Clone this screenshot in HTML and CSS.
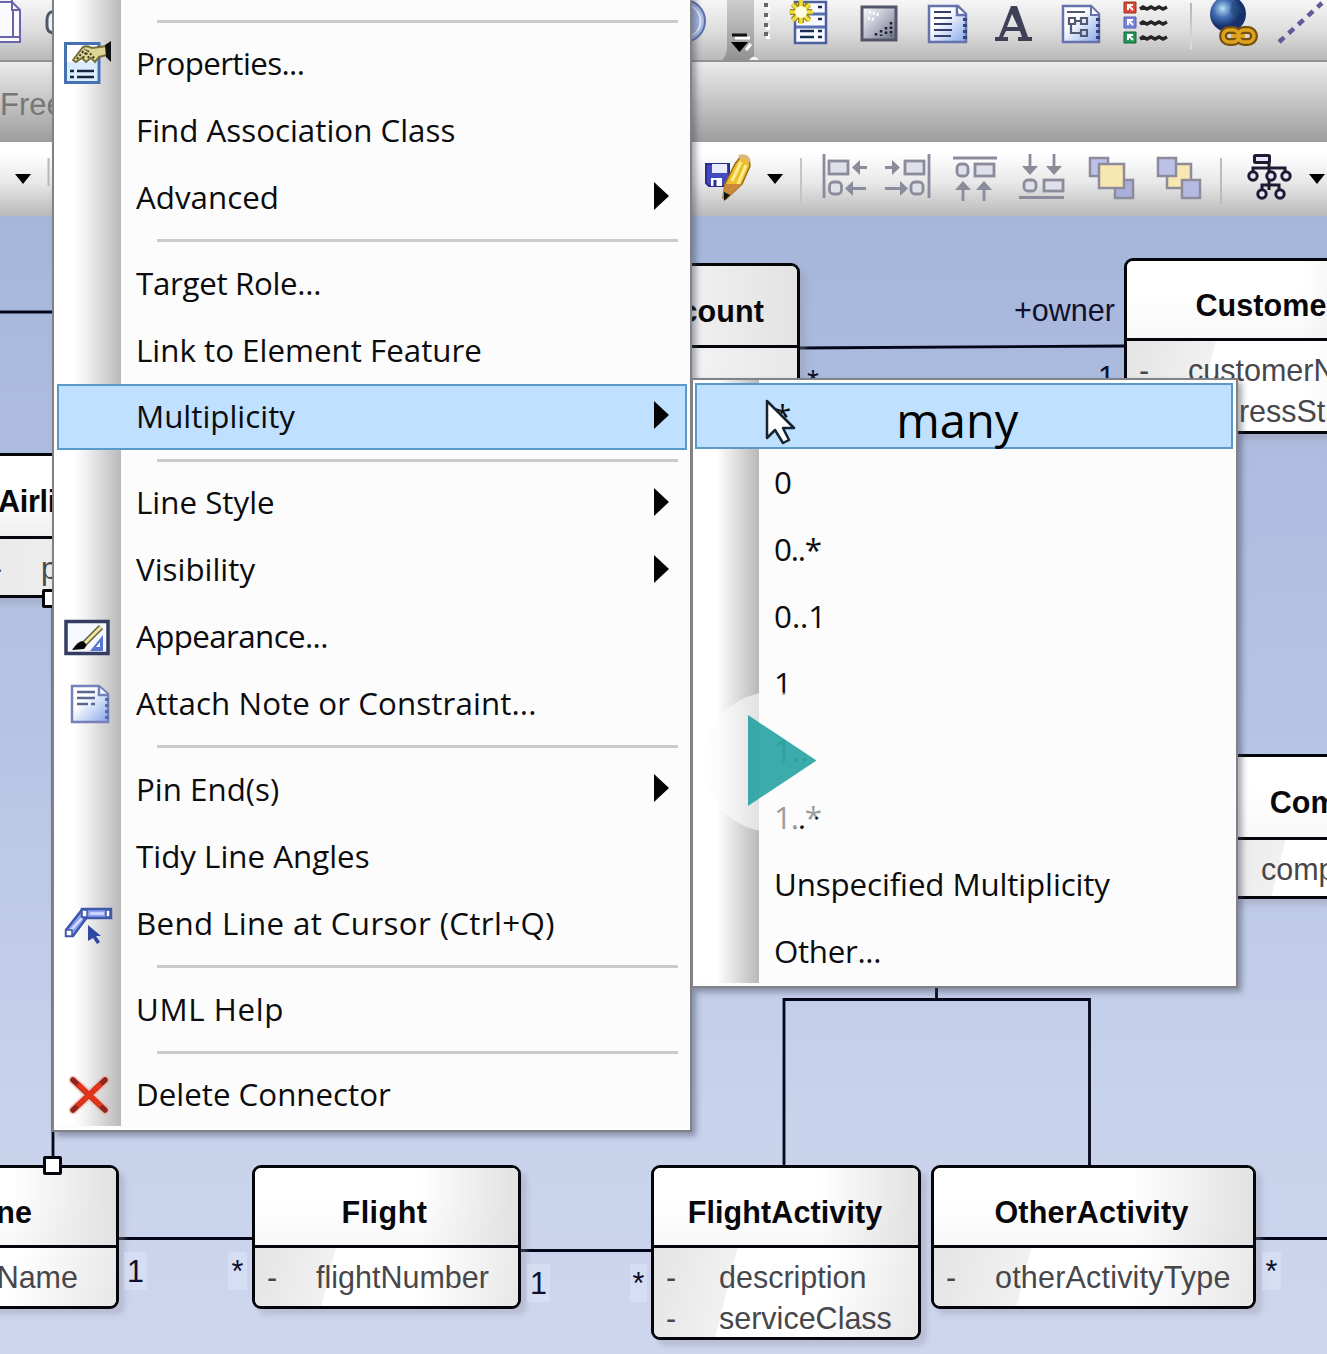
FILE: index.html
```html
<!DOCTYPE html>
<html lang="en">
<head>
<meta charset="utf-8">
<title>Class diagram</title>
<link rel="stylesheet" href="styles.css">
</head>
<body>
<div class="app">
  <header class="bar bar-elements">
    <div class="bar-left"><svg viewBox="0 0 53 62" width="53" height="62">
      <g fill="#fbfbff" stroke="#6a66ac" stroke-width="2"><path d="M-4 2H12L20 10V42H-4Z"/><path d="M12 0V10H20M13 10V37M-2 37H20" fill="none"/></g>
      <path d="M56 12h-5q-4 2-4 8v6q0 6 6 7" fill="#eef4fa" stroke="#4e5968" stroke-width="3"/></svg></div>
    <svg class="bar-start" viewBox="692 0 86 62" width="86" height="62">
      <circle cx="684" cy="21" r="21" fill="#a9b8e4" stroke="#5a6dac" stroke-width="2"/><circle cx="684" cy="21" r="16.500" fill="none" stroke="#e2e8fb" stroke-width="2"/>
      <path d="M727 0H754V60H722Q727 56 727 46Z" fill="url(#overflowShade)"/>
      <defs><linearGradient id="overflowShade" x1="0" y1="0" x2="0" y2="1"><stop offset="0" stop-color="#cdcdcd"/><stop offset="1" stop-color="#929292"/></linearGradient></defs>
      <path d="M735 38H750M746 50L751 44" stroke="#fff" stroke-width="3"/><path d="M732 35H747" stroke="#111" stroke-width="3"/><path d="M731 42H748L739.500 52Z" fill="#000"/>
      <path d="M749 60q5-7 10 0Z" fill="#f4f4f4"/>
      <g fill="#fff"><path d="M766 5h4v5h-4zM766 15h4v5h-4zM766 25h4v5h-4zM766 34h4v5h-4z"/></g>
      <g fill="#666"><path d="M764 3h4v4h-4zM764 13h4v4h-4zM764 23h4v4h-4zM764 32h4v4h-4z"/></g>
    </svg>
    <svg class="tool" viewBox="778 0 67 62">
      <path d="M795 2H826V43H795Z" fill="#f7f9ff" stroke="#4a609f" stroke-width="2.500"/><path d="M796 27H825M796 14H825" stroke="#5870b0" stroke-width="3"/>
      <path d="M800 31H814M800 37H814M818 31H822M818 37H822M818 7h4M818 19h4" stroke="#182c58" stroke-width="2.500"/>
      <path d="M801 1V23M790 12H812M793 4L809 20M809 4L793 20" stroke="#9a8418" stroke-width="6"/><path d="M801 0V24M789 12H813M792 4L810 21M810 4L792 21" stroke="#eedd3e" stroke-width="3.500"/><circle cx="801" cy="12" r="6" fill="#fffde0"/>
    </svg>
    <svg class="tool" viewBox="845 0 67 62">
      <defs><linearGradient id="metal" x1="0" y1="0" x2="1" y2="1"><stop offset="0" stop-color="#fff"/><stop offset=".45" stop-color="#bfc1cf"/><stop offset="1" stop-color="#686d83"/></linearGradient></defs>
      <path d="M862 7H896V40H862Z" fill="url(#metal)" stroke="#53556a" stroke-width="3"/>
      <path d="M891 22V36M886 27V36M881 30V36M876 33V36" stroke="#1d1d2b" stroke-width="2.500" stroke-dasharray="2.500 2"/><path d="M869 12l10 3M868 18l7 2" stroke="#fff" stroke-width="3" stroke-dasharray="2 2"/>
    </svg>
    <svg class="tool" viewBox="912 0 67 62">
      <defs><linearGradient id="paper" x1="0" y1="0" x2="1" y2="1"><stop offset=".35" stop-color="#fff"/><stop offset="1" stop-color="#85a7eb"/></linearGradient></defs>
      <path d="M929 6H958L966 14V42H929Z" fill="url(#paper)" stroke="#6672ac" stroke-width="2.500"/><path d="M957 7V15H966" fill="#fff" stroke="#6672ac" stroke-width="2.500"/>
      <path d="M965 18V42" stroke="#31457c" stroke-width="4" stroke-dasharray="3 3"/>
      <path d="M934 12H951M934 18H952M934 24H952M934 30H952M934 36H951" stroke="#35426f" stroke-width="2.200"/>
    </svg>
    <svg class="tool" viewBox="979 0 67 62"><path d="M1011 6H1017L1028 37H1032V41H1018V37H1022L1020 31H1006L1003 37H1008V41H995V37H999ZM1012 14L1007 27H1018Z" fill="#3f4056" fill-rule="evenodd"/></svg>
    <svg class="tool" viewBox="1046 0 67 62">
      <path d="M1063 6H1091L1099 14V42H1063Z" fill="url(#paper)" stroke="#6672ac" stroke-width="2.500"/><path d="M1091 7V15H1099" fill="#fff" stroke="#6672ac" stroke-width="2"/>
      <path d="M1098 18V42" stroke="#31457c" stroke-width="4" stroke-dasharray="3 3"/>
      <g fill="none" stroke="#515975" stroke-width="2.200"><path d="M1067 12H1085M1075 21H1080M1071 25V33H1080M1069 18h6v6h-6zM1081 18h6v6h-6zM1081 30h6v6h-6z"/></g>
    </svg>
    <svg class="tool" viewBox="1113 0 67 62">
      <path d="M1124 2h12v11h-12z" fill="#dc4932" stroke="#943527"/><path d="M1124 17h12v11h-12z" fill="#7583dc" stroke="#5963a6"/><path d="M1124 32h12v11h-12z" fill="#259657" stroke="#17653a"/>
      <path d="M1128 5l5 5M1128 10V5h5M1128 20l5 5M1128 25V20h5M1128 35l5 5M1128 40V35h5" stroke="#fff" stroke-width="2" fill="none"/>
      <path d="M1140 9l3-2 4 2 4-2 4 2 4-2 4 2 4-2M1140 24l3-2 4 2 4-2 4 2 4-2 4 2 4-2M1140 39l3-2 4 2 4-2 4 2 4-2 4 2 4-2" fill="none" stroke="#252525" stroke-width="3.500"/>
    </svg>
    <span class="divider"></span>
    <svg class="tool" viewBox="1199 0 67 62">
      <defs><radialGradient id="globe" cx=".35" cy=".35"><stop offset="0" stop-color="#b8e2f3"/><stop offset=".5" stop-color="#4570b5"/><stop offset="1" stop-color="#17306c"/></radialGradient></defs>
      <circle cx="1226" cy="14" r="18" fill="url(#globe)"/><path d="M1230 2l8 2 3 8-6 6-7-6z" fill="#18456b" opacity=".5"/>
      <g fill="none" stroke="#77500d" stroke-width="8"><rect x="1221" y="30" width="16" height="12" rx="6"/><rect x="1236" y="30" width="16" height="12" rx="6"/></g>
      <g fill="none" stroke="#dda31e" stroke-width="3.500"><rect x="1221" y="30" width="16" height="12" rx="6"/><rect x="1236" y="30" width="16" height="12" rx="6"/><path d="M1229 36H1243"/></g>
    </svg>
    <svg class="tool" viewBox="1266 0 67 62"><path d="M1277 42L1320 3" stroke="#5d5c98" stroke-width="4.500" stroke-dasharray="7 6"/></svg>
  </header>

  <div class="search"><span class="search-text">Free</span></div>

  <div class="bar bar-layout">
    <div class="bar-left"><svg viewBox="0 142 53 74" width="53" height="74"><path d="M15 174H31L23 184Z"/><path d="M48.500 158V186" stroke="#b8b8b8" stroke-width="2"/></svg></div>
    <svg class="save" viewBox="692 142 119 74" width="119" height="74">
      <path d="M706 164H729V186H709L706 183Z" fill="#434ac0" stroke="#292f91" stroke-width="2"/><path d="M712 164H727V173H712Z" fill="#e9ecff"/><path d="M711 178H722V186H711Z" fill="#fff"/><path d="M715 180v6" stroke="#292f91" stroke-width="3"/>
      <path d="M741 156Q750 156 750 166L742 184 726 199 723 198 725 184 735 164Z" fill="#edbd32" stroke="#9c6b16" stroke-width="1.500"/><path d="M741 162L732 181M746 165L738 184" stroke="#fff08a" stroke-width="3"/><path d="M742 184L726 199 723 198 725 184Z" fill="#c98a3c"/><path d="M724 192L730 195 724 201Z" fill="#111"/><path d="M739 157q8-3 10 5" stroke="#dcb97c" stroke-width="4" fill="none"/>
      <path d="M767 174H783L775 184Z"/><path d="M801 158V204" stroke="#c4c4c4" stroke-width="2"/>
    </svg>
    <svg class="tool" viewBox="811 142 67 74"><g class="align"><path d="M824 154V198"/><rect x="829" y="161" width="19" height="13"/><rect x="829.500" y="182" width="12" height="12" rx="4"/><path d="M856 167.500H867M850 188.500H866"/></g><path class="align-head" d="M852 167.500L860 160V175ZM845 188.500L853 181V196Z"/></svg>
    <svg class="tool" viewBox="878 142 67 74"><g class="align"><path d="M929 154V198"/><rect x="905" y="161" width="19" height="13"/><rect x="911" y="182" width="12" height="12" rx="4"/><path d="M885 167.500H896M885 188.500H901"/></g><path class="align-head" d="M900 167.500L892 160V175ZM908 188.500L900 181V196Z"/></svg>
    <svg class="tool" viewBox="945 142 67 74"><g class="align"><path d="M953 158H997"/><rect x="957" y="164" width="11" height="12" rx="4"/><rect x="975" y="164" width="19" height="12"/><path d="M963 188V201M984 188V201"/></g><path class="align-head" d="M963 181L955 190H971ZM984 181L976 190H992Z"/></svg>
    <svg class="tool" viewBox="1012 142 67 74"><g class="align"><path d="M1019 197.500H1064"/><rect x="1024" y="180" width="12" height="11" rx="4"/><rect x="1044" y="180" width="19" height="11"/><path d="M1030 154V167M1054 154V167"/></g><path class="align-head" d="M1030 175L1022 166H1038ZM1054 175L1046 166H1062Z"/></svg>
    <svg class="tool" viewBox="1079 142 67 74"><g stroke="#8d8b9c" stroke-width="2.500"><path d="M1090 158h18v18h-18z" fill="#bcc3e8"/><path d="M1115 180h18v18h-18z" fill="#a9b0da"/><path d="M1099 164h25v24h-25z" fill="#f7e8b2"/></g></svg>
    <svg class="tool" viewBox="1146 142 67 74"><g stroke="#8d8b9c" stroke-width="2.500"><path d="M1167 164h24v24h-24z" fill="#f7e8b2"/><path d="M1158 158h18v18h-18z" fill="#bcc1e7"/><path d="M1182 180h18v18h-18z" fill="#b4bae2"/></g></svg>
    <svg class="tree" viewBox="1213 142 114 74" width="114" height="74"><path d="M1221 158V204" stroke="#bbb" stroke-width="2"/>
      <g fill="#e7e7fa" stroke="#1c1b32" stroke-width="3"><path d="M1269 163V173M1253 175V168H1285V175M1269 168V190M1262 190V185H1279V190" fill="none"/><rect x="1254.500" y="155.500" width="15" height="7" rx="1"/><circle cx="1253" cy="176" r="4.200"/><circle cx="1271" cy="176" r="4.200"/><circle cx="1286" cy="176" r="4.200"/><circle cx="1262" cy="194" r="4.200"/><circle cx="1280" cy="194" r="4.200"/></g>
      <path d="M1309 174H1325L1317 184Z"/></svg>
  </div>

  <main class="canvas">
    <svg class="links" viewBox="0 216 1327 1138" width="1327" height="1138">
      <path d="M0 312H60M53 600V1165M798 348L1126 346M118 1238.500H255M518 1250.500H654M1254 1238.500H1327M936.500 980V999.500M784 1167V999.500H1089.500V1167"/>
    </svg>
    <section class="node n-account"><h2>Account</h2><ul></ul></section>
    <section class="node n-customer"><h2>Customer</h2><ul><li>customerName</li><li>addressStreet</li></ul></section>
    <section class="node n-airline"><h2>Airline</h2><ul><li>phone</li></ul></section>
    <section class="node n-company"><h2>Company</h2><ul><li>companyName</li></ul></section>
    <section class="node n-plane"><h2>Airplane</h2><ul><li>planeName</li></ul></section>
    <section class="node n-flight"><h2>Flight</h2><ul><li>flightNumber</li></ul></section>
    <section class="node n-flightact"><h2>FlightActivity</h2><ul><li>description</li><li>serviceClass</li></ul></section>
    <section class="node n-otheract"><h2>OtherActivity</h2><ul><li>otherActivityType</li></ul></section>
    <span class="end e-owner">+owner</span>
    <span class="end e-acc">*</span>
    <span class="end e-cust">1</span>
    <span class="end tint e-plane">1</span>
    <span class="end tint e-fl-left">*</span>
    <span class="end tint e-fl-right">1</span>
    <span class="end tint e-fa">*</span>
    <span class="end tint e-oa">*</span>
    <i class="handle h-top"></i>
    <i class="handle h-bottom"></i>
  </main>

  <nav class="menu menu-main">
    <hr>
    <div class="item"><svg class="icon" viewBox="57 30 64 67">
      <path d="M65.500 43.500H99V82.500H65.500Z" fill="#dcecff" stroke="#4672b4" stroke-width="3"/><path d="M67 45H97V62H67Z" fill="#fff"/><path d="M70 71H74M77 71H94M70 77H74M77 77H94" stroke="#14243f" stroke-width="2.500"/>
      <path d="M73 60L83 47Q87 45 92 48L107 46V55L99 57 95 62 91 58 86 62 82 58 76 62Z" fill="#ded693" stroke="#75703b" stroke-width="2"/><path d="M77 59l8-10M83 58l4-8M89 58l-4-7M94 58l-6-7" stroke="#3c3820" stroke-width="2" stroke-dasharray="2 2"/><path d="M105 45l6-4V62l-5-5Z" fill="#111"/></svg><span class="tight-2">Properties...</span></div>
    <div class="item"><span>Find Association Class</span></div>
    <div class="item sub"><span>Advanced</span></div>
    <hr>
    <div class="item"><span class="tight-1">Target Role...</span></div>
    <div class="item"><span>Link to Element Feature</span></div>
    <div class="item sub active"><span>Multiplicity</span></div>
    <hr>
    <div class="item sub"><span>Line Style</span></div>
    <div class="item sub"><span>Visibility</span></div>
    <div class="item"><svg class="icon" viewBox="57 603 64 67"><path d="M66 620.500H108V652.500H66Z" fill="#f5f8ff" stroke="#343c62" stroke-width="3.500"/><path d="M90 650L103 634V650Z" fill="#5676d5"/><path d="M96 646h4v-5z" fill="#fff"/><path d="M85 642L101 626" stroke="#66613a" stroke-width="6"/><path d="M85 642L101 626" stroke="#eee5a2" stroke-width="3"/><path d="M72 649Q78 640 83 640L87 644 84 648Z" fill="#050505"/></svg><span class="tight-2">Appearance...</span></div>
    <div class="item"><svg class="icon" viewBox="57 671 64 67"><path d="M72 687H99L108 695V723H72Z" fill="url(#paper)" stroke="#7581bd" stroke-width="2.500"/><path d="M99 688V696H108" fill="#fff" stroke="#7581bd" stroke-width="2.500"/><path d="M107 699V723" stroke="#566da8" stroke-width="4" stroke-dasharray="3 3"/><path d="M77 693H95M77 699H95M77 705H88M91 705h4" stroke="#596791" stroke-width="2.500"/></svg><span class="wide-1">Attach Note or Constraint...</span></div>
    <hr>
    <div class="item sub"><span>Pin End(s)</span></div>
    <div class="item"><span>Tidy Line Angles</span></div>
    <div class="item"><svg class="icon" viewBox="57 890 64 67"><g fill="#8ba3ee" stroke="#4058ab" stroke-width="2.500"><path d="M66 930L81 911 87 917 73 936H66Z"/><path d="M82 909H111V918H82Z"/></g><path d="M71 930l11-12M90 913.500h14" stroke="#d5defc" stroke-width="2.500"/><path d="M66 930h6v6h-6zM82 910h5v7h-5zM106 910h4v7h-4z" fill="#fff" stroke="#4058ab" stroke-width="1.500"/><path d="M88 925L101 936H96L100 942 97 944 93 938 88 941Z" fill="#3048a2"/></svg><span class="wide-2">Bend Line at Cursor (Ctrl+Q)</span></div>
    <hr>
    <div class="item"><span class="wide-3">UML Help</span></div>
    <hr>
    <div class="item"><svg class="icon" viewBox="57 1062 64 67"><path d="M73 1080L105 1110M105 1080L73 1110" stroke="#f4a08d" stroke-width="9" stroke-linecap="round" opacity=".5"/><path d="M73 1080L105 1110M105 1080L73 1110" stroke="#8e261b" stroke-width="5.500" stroke-linecap="round"/><path d="M78 1084L101 1106M101 1084L77 1106" stroke="#e33419" stroke-width="5"/></svg><span>Delete Connector</span></div>
  </nav>

  <nav class="menu menu-sub">
    <div class="item active"><span>*</span><strong class="caption">many</strong></div>
    <div class="item"><span>0</span></div>
    <div class="item"><span class="tight-3">0..*</span></div>
    <div class="item"><span>0..1</span></div>
    <div class="item"><span>1</span></div>
    <div class="item"><span>1..</span></div>
    <div class="item"><span class="tight-3">1..*</span></div>
    <div class="item"><span class="tight-0">Unspecified Multiplicity</span></div>
    <div class="item"><span class="tight-1">Other...</span></div>
  </nav>

  <svg class="cursor" viewBox="764 398 34 48" width="34" height="48"><path d="M767 401V438L775 430 783 443 789 440 783 428H794Z" fill="#fff" stroke="#152333" stroke-width="2.500" stroke-linejoin="round"/></svg>
  <svg class="play" viewBox="703 692 140 140" width="140" height="140"><circle cx="773" cy="762" r="70" fill="#fcfcfc" opacity=".6"/><path d="M748 715L816.500 760.500 748 806Z" fill="#20a09f" opacity=".88"/></svg>
</div>
</body>
</html>
```
FILE: styles.css
```css
* { box-sizing: border-box; }
body { margin: 0; }
.app {
  position: relative;
  width: 1327px;
  height: 1354px;
  overflow: hidden;
  display: flex;
  flex-direction: column;
  font-family: "Liberation Sans", Arial, sans-serif;
}
svg { display: block; flex: none; }

/* toolbars */
.bar { display: flex; flex: none; overflow: hidden; }
.bar-left { width: 692px; flex: none; }
.bar-elements {
  height: 62px;
  background: linear-gradient(#f6f6f6, #dedede 50%, #b9b9b9);
  border-bottom: 2px solid #929292;
}
.bar-layout { height: 74px; background: linear-gradient(#fff 15%, #e8e8e8 55%, #b9b9b9); }
.tool { width: 67px; height: 100%; }
.bar-elements .tool { height: 62px; }
.divider { width: 2px; height: 46px; margin: 3px 9px 0 10px; background: linear-gradient(#b5b5b5, #ddd); flex: none; }
.search {
  height: 80px;
  flex: none;
  display: flex;
  align-items: center;
  background: linear-gradient(#ebebeb, #c8c8c8 45%, #9d9d9d);
}
.search-text { font-size: 31px; color: #777; padding-top: 6px; }
.align { fill: #dfe0ea; stroke: #8b8c9b; stroke-width: 2.8px; }
.align-head { fill: #8b8c9b; }

/* diagram */
.canvas {
  position: relative;
  flex: 1;
  background: linear-gradient(#a6b6db, #b6c4e4 45%, #c6d1eb 75%, #ced6ed);
}
.links { position: absolute; left: 0; top: 0; fill: none; stroke: #04061a; stroke-width: 2.8px; }
.node {
  position: absolute;
  display: flex;
  flex-direction: column;
  border: 3px solid #05060c;
  border-radius: 9px;
  background: #fff;
  overflow: hidden;
  box-shadow: 6px 6px 5px rgba(150, 150, 165, .35);
  font-size: 30.5px;
}
.node h2 {
  margin: 0;
  height: 80px;
  flex: none;
  padding: 11px 2px 0 0;
  display: flex;
  align-items: center;
  justify-content: center;
  font-size: inherit;
  font-weight: bold;
  letter-spacing: .1px;
  border-bottom: 3px solid #05060c;
  color: #08080c;
  background: linear-gradient(90deg, transparent 62%, #e1e1e1), linear-gradient(#fff 40%, #f8f8f8);
}
.node ul {
  margin: 0;
  padding: 9px 0 0 12px;
  flex: 1;
  list-style: none;
  color: #47474b;
  background: linear-gradient(104deg, #e4e4e5, #f1f1f1 29%, #fff 29.3%, #fff 62%, #e7e7e7);
}
.node li { display: flex; line-height: 41px; white-space: nowrap; }
.node li::before { content: "-"; width: 49px; flex: none; }
.n-account { left: 560px; top: 47px; width: 240px; height: 180px; }
.n-account h2 { justify-content: flex-end; padding-right: 33px; height: 82px; background: linear-gradient(90deg, #fff, #e3e3e3); }
.n-account ul { background: linear-gradient(90deg, #fff, #e8e8e8); }
.n-customer { left: 1124px; top: 42px; width: 288px; height: 176px; }
.n-airline { left: -23px; top: 237px; width: 142px; height: 145px; }
.n-airline h2, .n-company h2 { height: 83px; }
.n-airline h2 { padding-right: 7px; letter-spacing: -.3px; background: linear-gradient(#fff 40%, #f0f0f0); }
.n-airline ul { background: linear-gradient(90deg, #e9e9e9, #f1f1f1); }
.n-company { left: 1197px; top: 538px; width: 285px; height: 145px; }
.n-company h2 { padding-right: 0; }
.n-plane { left: -160px; top: 949px; width: 279px; height: 144px; }
.n-plane h2 { justify-content: flex-end; padding-right: 84px; }
.n-plane li { justify-content: flex-end; padding-right: 38px; }
.n-flight { left: 252px; top: 949px; width: 269px; height: 144px; }
.n-flight h2 { padding-right: 4px; letter-spacing: .5px; }
.n-flightact { left: 651px; top: 949px; width: 270px; height: 175px; }
.n-flightact li::before { width: 53px; }
.n-otheract { left: 931px; top: 949px; width: 325px; height: 144px; }
.n-otheract h2 { padding-right: 4px; letter-spacing: .2px; }
.n-otheract li { letter-spacing: .2px; }
.end { position: absolute; font-size: 30.5px; line-height: 38px; color: #10102c; }
.tint { background: rgba(225, 232, 250, .45); text-align: center; }
.e-owner { left: 1014px; top: 75px; }
.e-acc { left: 807px; top: 146px; }
.e-cust { left: 1098px; top: 142px; }
.e-plane { left: 124px; top: 1036px; width: 23px; }
.e-fl-left { left: 228px; top: 1036px; width: 19px; }
.e-fl-right { left: 527px; top: 1048px; width: 23px; }
.e-fa { left: 630px; top: 1048px; width: 17px; }
.e-oa { left: 1262px; top: 1036px; width: 19px; }
.handle { position: absolute; width: 19px; height: 19px; border: 3px solid #05060c; border-radius: 2px; background: #fff; }
.h-top { left: 42px; top: 373px; }
.h-bottom { left: 43px; top: 940px; }

/* context menus */
.menu {
  position: absolute;
  display: flex;
  flex-direction: column;
  border: 2px solid #818286;
  box-shadow: 4px 4px 6px rgba(60, 65, 85, .45);
  font: 31.3px "Open Sans", "Noto Sans", sans-serif;
  color: #0c0c0e;
  background-color: #fcfcfd;
  background-repeat: no-repeat;
}
.menu-main {
  left: 52px;
  top: -14px;
  width: 640px;
  height: 1146px;
  padding: 23.5px 3px 0;
  background-image: linear-gradient(90deg, #fff 20px, #f1f1f1 32px, #b9b9b9 67px, #fcfcfd 67px);
  background-size: 100% 1138px;
}
.menu-sub {
  left: 691px;
  top: 378px;
  width: 547px;
  height: 610px;
  padding: 3px 3px 0 2px;
  background-image: linear-gradient(90deg, #fff 24px, #f1f1f1 32px, #b9b9b9 66px, #fcfcfd 66px);
  background-size: 100% 603px;
}
.menu hr { width: 521px; height: 3px; margin: 8px 0 8px 100px; border: 0; background: #cbcbcd; flex: none; }
.item { height: 66.9px; flex: none; display: flex; align-items: center; white-space: nowrap; padding-left: 79px; }
.item span { padding-bottom: 2px; }
.tight-0 { letter-spacing: -.12px; }
.tight-1 { letter-spacing: -.32px; }
.tight-2 { letter-spacing: -.6px; }
.tight-3 { letter-spacing: -1.2px; }
.wide-1 { letter-spacing: .1px; }
.wide-2 { letter-spacing: .36px; }
.wide-3 { letter-spacing: .6px; }
.icon { width: 64px; height: 67px; margin: 0 15px 0 -79px; }
.menu .active { background: #bfe0ff; box-shadow: inset 0 0 0 2px #5a9ac8; height: 65.9px; margin-bottom: 1px; }
.sub::after {
  content: "";
  margin: -3px 18px 0 auto;
  border: 14px solid transparent;
  border-left: 15px solid #050505;
  border-right: 0;
}
.caption { margin-left: 105px; padding-top: 9px; font-size: 47px; line-height: 54px; font-weight: 500; color: #000; }
.cursor { position: absolute; left: 764px; top: 398px; }
.play { position: absolute; left: 703px; top: 692px; }
```
